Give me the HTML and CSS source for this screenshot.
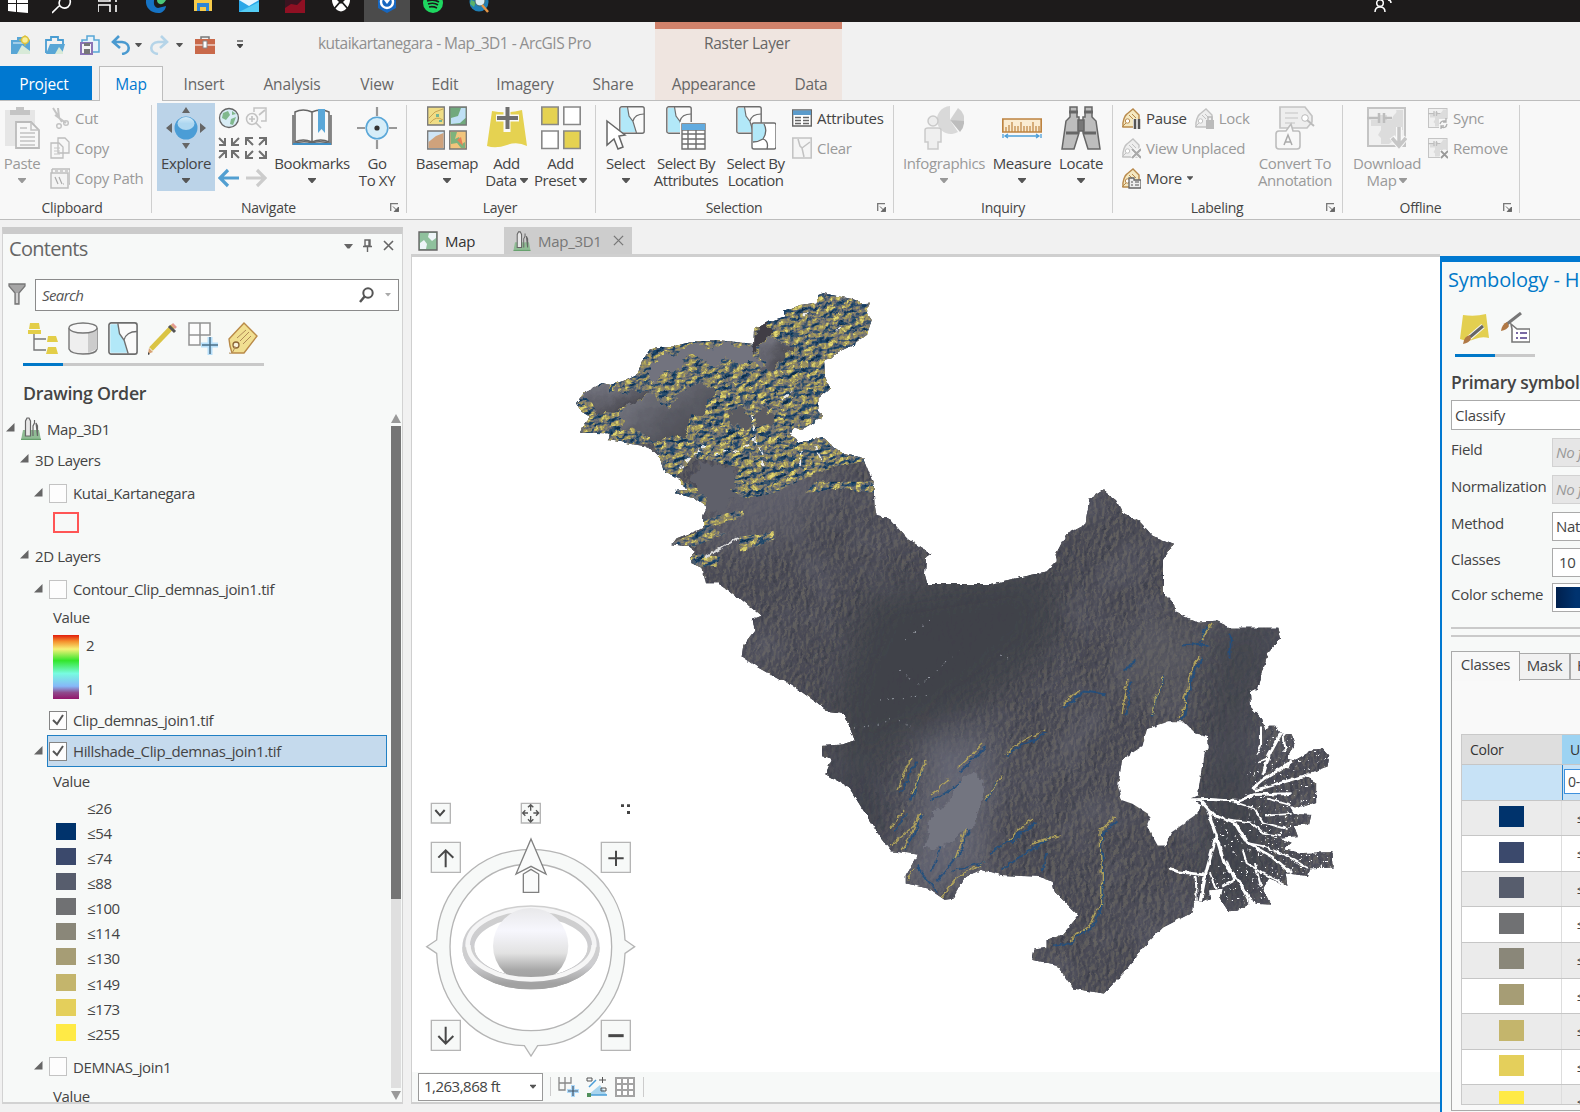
FILE: index.html
```html
<!DOCTYPE html>
<html lang="en">
<head>
<meta charset="utf-8">
<title>kutaikartanegara - Map_3D1 - ArcGIS Pro</title>
<link rel="stylesheet" href="styles.css">
</head>
<body>
<svg class="defs" aria-hidden="true">
  <defs>
    <symbol id="tri" viewBox="0 0 8 5"><path d="M0 0H8V1L4.5 5H3.5L0 1Z"/></symbol>
    <symbol id="launch" viewBox="0 0 9 9"><path d="M.7 8V.7H8" fill="none" stroke="#777" stroke-width="1.3"/><path d="M3 3.5l4 4M8.6 4v4.6H4.2z" stroke="#666" fill="#666"/></symbol>
    <symbol id="exp" viewBox="0 0 9 9"><path d="M8.5 0V8.5H0Z" fill="#666"/></symbol>
    <symbol id="poly" viewBox="0 0 26 28"><rect x=".8" y=".8" width="24.4" height="26.4" rx="2" fill="#fafafa" stroke="#6e6e6e" stroke-width="1.4"/><path d="M2 2H8.5L10 10L14 16L16.5 26H2Z" fill="#b2e8f8"/><path d="M8.5 1L10 10L14 15.5L17.500 27M14 15C15 11 19 8 25 8" fill="none" stroke="#6e6e6e" stroke-width="1.2"/></symbol>
    <symbol id="tag" viewBox="0 0 20 22"><path d="M2 20C1 15 4 8 6 7L12 2L18 8V20Z" fill="var(--f)" stroke="var(--s)" stroke-width="1.4"/><circle cx="6.500" cy="14" r="2.200" fill="#fff" stroke="var(--s)"/><path d="M1 20L5 16M8 8l4 4M11 7l4 4" stroke="var(--s)" fill="none"/></symbol>
    <symbol id="city" viewBox="0 0 20 23"><path d="M2 13H18L20 23H0Z" fill="#8fbc94"/><path d="M0 22.300H20" stroke="#5c9862"/><path d="M4.500 19V4L6 1H8L9.500 4V19ZM12 19V9L13.500 6V3M15 6L16.500 9V19Z" fill="#e8e8e8" stroke="#666" stroke-width="1.200"/></symbol>
    <symbol id="dl" viewBox="0 0 40 42"><rect x="1" y="2" width="37" height="38" fill="#f0f0f0" stroke="#c4c4c4" stroke-width="2"/><path d="M4 14H13V9H20V14H25C26 7 31 8 29 4L36 4V24H30L28 33L22 38H14V32L11 29L14 24V20H4Z" fill="#dcdcdc"/><path d="M0 12H12M12 7V17M17 7V17M17 12H25" stroke="#bdbdbd" stroke-width="2.500"/></symbol>
  </defs>
</svg>

<div class="taskbar">
  <span class="slot"><svg viewBox="0 0 26 22"><path d="M2 0h8v3H2zM11 0h11v3H11zM2 4h8v8l-8-1zM11 4h11v9l-11-1z" transform="translate(-2 0)" fill="#fff"/></svg></span>
  <span class="slot"><svg viewBox="0 0 26 22"><path d="M0 13L7 6M8 0C5 6 11 10 16 7C18 5 19 3 18 0" fill="none" stroke="#fff" stroke-width="1.600"/></svg></span>
  <span class="slot"><svg viewBox="0 0 26 22"><path d="M0 0V1H12V0M0 12V5H12V12M18 5V12M18 0V2" fill="none" stroke="#fff" stroke-width="1.600"/></svg></span>
  <span class="slot"><svg viewBox="0 0 26 22"><path d="M2 0C1 8 8 14 16 13C20 12 22 8 22 6L14 8C9 7 10 2 10 0Z" fill="#1673c4"/><path d="M13 0C13 5 19 6 22 0Z" fill="#4cc87a"/></svg></span>
  <span class="slot"><svg viewBox="0 0 26 22"><path d="M4 0H22V11H4Z" fill="#f7cb4a"/><path d="M7 11V3H19V11H16V7H10V11Z" fill="#2f86d8"/></svg></span>
  <span class="slot"><svg viewBox="0 0 26 22"><path d="M3 0H23V12H3Z" fill="#2aa7e8"/><path d="M3 0L13 6L23 0Z" fill="#e8f6ff"/><path d="M3 12L23 2V12Z" fill="#55cdf5"/></svg></span>
  <span class="slot"><svg viewBox="0 0 26 22"><path d="M3 0H23V13H3Z" fill="#8f1023"/><path d="M3 0H20L15 5L9 4L3 8Z" fill="#3a1420"/></svg></span>
  <span class="slot"><svg viewBox="0 0 26 22"><path d="M4 0C4 5 8 11 13 11.500C18 11 22 5 22 0H17L13 4L9 0Z" fill="#fff"/><path d="M6 9L13 1L20 9" stroke="#1b1b1b" stroke-width="1.800" fill="none"/></svg></span>
  <span class="slot on"><svg viewBox="0 0 26 22"><path d="M4 0V8L13 13L22 8V0Z" fill="#1767c0"/><circle cx="13" cy="2" r="6" fill="none" stroke="#fff" stroke-width="2.400"/><path d="M10 0H16L13 4Z" fill="#fff"/></svg></span>
  <span class="slot"><svg viewBox="0 0 26 22"><circle cx="13" cy="3" r="10" fill="#1ed760"/><path d="M7 1Q14 -1 19 2M8 4Q14 2 18 5M9 7Q13 6 17 8" stroke="#1b1b1b" stroke-width="1.600" fill="none"/></svg></span>
  <span class="slot"><svg viewBox="0 0 26 22"><circle cx="13" cy="2" r="9.500" fill="#1f7fb5"/><path d="M5 0L10 2L8 7L4 4Z" fill="#58b26a"/><circle cx="14" cy="1" r="5" fill="#d9ecf2" stroke="#466"/><path d="M16 5L22 12" stroke="#e59544" stroke-width="2.500"/></svg></span>
  <svg class="person" viewBox="0 0 20 22"><circle cx="6" cy="3" r="3.300" fill="none" stroke="#fff" stroke-width="1.500"/><path d="M1 12Q1 7 6 7Q11 7 11 12M14 0Q17 0 17 3" fill="none" stroke="#fff" stroke-width="1.500"/></svg>
</div>

<header class="head">
  <div class="head-main">
    <div class="title">
      <svg class="q q1" viewBox="0 0 20 20"><path d="M1 5H7V2H13V5H20V19H1Z" fill="#58a6d6"/><path d="M3 8H17" stroke="#eaf5fb"/><path d="M7 19L12 10L20 16V19Z" fill="#d8ead8"/><circle cx="15" cy="5" r="3.500" fill="#f8ef9a" stroke="#dcc13b" stroke-width="1.500"/><path d="M15 -1V1M15 9v2M9 5h2M19 5h2" stroke="#dcc13b"/></svg>
      <svg class="q q2" viewBox="0 0 20 20"><path d="M1 18V5H6V2H13V5H18V9" fill="none" stroke="#4a9dd2" stroke-width="1.800"/><path d="M1 19L5 9H20L17 19Z" fill="#58a6d6"/><path d="M10 19L14 12L18 17V19Z" fill="#d8ead8"/></svg>
      <svg class="q q3" viewBox="0 0 20 20"><path d="M2 5H7V1H14V5H19V17H2Z" fill="#e7f3fa" stroke="#58a6d6" stroke-width="1.500"/><path d="M1 8H12V19H1Z" fill="#f5f5f5" stroke="#8b74b5" stroke-width="2"/><path d="M4 8H10V11H4ZM4 14H10V19H4Z" fill="#777"/></svg>
      <svg class="q q4" viewBox="0 0 20 20"><path d="M8 1L2 7L9 13M3 7H11C20 8 20 18 11 19" fill="none" stroke="#4a9ad0" stroke-width="2.600"/></svg>
      <svg class="t t1"><use href="#tri"/></svg>
      <svg class="q q5" viewBox="0 0 20 20"><path d="M12 1L18 7L11 13M17 7H9C0 8 0 18 9 19" fill="none" stroke="#b5d4e8" stroke-width="2.600"/></svg>
      <svg class="t t2"><use href="#tri"/></svg>
      <svg class="q q6" viewBox="0 0 20 20"><path d="M6 5V2H14V5" fill="none" stroke="#777" stroke-width="1.500"/><path d="M0 4H20V19H0Z" fill="#c9694a"/><path d="M0 10H20" stroke="#eed2c8" stroke-width="1.500"/><path d="M8 6H12V13H8Z" fill="#fff" stroke="#888"/></svg>
      <svg class="q q7" viewBox="0 0 8 9"><path d="M1 1H7" stroke="#444" stroke-width="1.300"/><path d="M1 4H7V5L4.500 8H3.500L1 5Z" fill="#444"/></svg>
      <span class="app">kutaikartanegara - Map_3D1 - ArcGIS Pro</span>
    </div>
    <nav class="tabs">
      <b class="project">Project</b><b class="active">Map</b><span class="w82">Insert</span><span class="w94">Analysis</span><span class="w76">View</span><span class="w60">Edit</span><span class="w100">Imagery</span><span class="w76">Share</span>
    </nav>
  </div>
  <div class="context"><div class="ctitle">Raster Layer</div><div class="ctabs"><span class="cap">Appearance</span><span class="cda">Data</span></div></div>
</header>

<div class="ribbon">
  <section class="group g1">
    <div class="body">
      <div class="btn off w45"><svg viewBox="0 0 40 44"><path d="M3 4H33V40H3Z" fill="#e6e6e6"/><path d="M8 9V4H14V1H22V4H28V9Z" fill="#c4c4c4"/><path d="M14 16H29L37 24V42H14Z" fill="#f7f7f7" stroke="#bbb" stroke-width="1.800"/><path d="M29 16V24H37M18 22H25M18 27H33M18 31H33M18 35H33M18 39H33" stroke="#c2c2c2" fill="none" stroke-width="1.500"/></svg><span>Paste</span><svg class="tri"><use href="#tri"/></svg></div>
      <div class="small off pl5">
        <p><svg viewBox="0 0 20 22"><path d="M3 1L12 15M8 1L9 10M5 8L16 16" stroke="#c4c4c4" stroke-width="2" fill="none"/><circle cx="9" cy="19" r="2.300" fill="none" stroke="#c4c4c4" stroke-width="1.500"/><circle cx="16" cy="16" r="2.300" fill="none" stroke="#c4c4c4" stroke-width="1.500"/></svg>Cut</p>
        <p><svg viewBox="0 0 20 22"><path d="M8 1H15L19 5V16H8ZM1 6H9L13 10V21H1Z" fill="#f7f7f7" stroke="#bdbdbd" stroke-width="1.300"/><path d="M4 11H10M4 14H10M4 17H10" stroke="#c6c6c6"/></svg>Copy</p>
        <p><svg viewBox="0 0 20 22"><path d="M2 2H20V17H19M2 2V6M1 6H18V21H1Z" fill="#f4f4f4" stroke="#bdbdbd" stroke-width="1.500"/><path d="M5 10L8 17M9 10L12 17M5 4H8M10 4H13M15 4H18M13 17H14" stroke="#aaa" stroke-width="1.200"/></svg>Copy Path</p>
      </div>
    </div><div class="glabel">Clipboard</div>
  </section>
  <section class="group g2">
    <div class="body">
      <div class="btn sel w58"><svg viewBox="0 0 40 44"><defs><linearGradient id="ball" x2="0" y2="1"><stop stop-color="#d5ebf8"/><stop offset=".5" stop-color="#aed7f0"/></linearGradient></defs><path d="M16 7L20 1L24 7ZM16 37L20 43L24 37ZM6 17L0 22L6 27ZM34 17L40 22L34 27Z" fill="#666"/><circle cx="20" cy="22" r="11.500" fill="#4b9dd6"/><ellipse cx="20" cy="17.500" rx="8.500" ry="6.500" fill="url(#ball)"/></svg><span>Explore</span><svg class="tri"><use href="#tri"/></svg></div>
      <div class="nav-grid">
        <svg viewBox="0 0 22 22"><circle cx="11" cy="11" r="9.500" fill="#d8ecf5" stroke="#666" stroke-width="1.300"/><path d="M5 6L10 4L12 8L8 13L4 11ZM13 12L18 10L15 18L12 17ZM14 4L18 7L14 8Z" fill="#80b88d"/></svg>
        <svg viewBox="0 0 22 22"><path d="M9 5V1H21V14H16" fill="none" stroke="#c3c3c3" stroke-width="1.500"/><circle cx="7" cy="12" r="5.500" fill="#f8f8f8" stroke="#c3c3c3" stroke-width="1.500"/><path d="M4 12H10M7 9V15M11 16L16 21M14 8L20 3" stroke="#c3c3c3" stroke-width="1.700"/></svg>
        <svg viewBox="0 0 22 22"><path d="M1 1L7 7M7 1V8H1M21 1L14 8M14 1V8H21M1 21L7 15M1 14H8V21M21 21L14 14M21 14H14V21" fill="none" stroke="#707070" stroke-width="2"/></svg>
        <svg viewBox="0 0 22 22"><path d="M8 8L1 1M8 1H1V8M14 8L21 1M14 1H21V8M8 14L1 21M1 14V21H8M14 14L21 21M21 14V21H14" fill="none" stroke="#707070" stroke-width="2"/></svg>
        <svg viewBox="0 0 22 22"><path d="M21 11H3M10 3L2 11L10 19" fill="none" stroke="#529fd1" stroke-width="3.200"/></svg>
        <svg viewBox="0 0 22 22"><path d="M1 11H19M12 3L20 11L12 19" fill="none" stroke="#ccc" stroke-width="3.200"/></svg>
      </div>
      <div class="btn w88"><svg viewBox="0 0 40 44"><path d="M1 9V38Q11 34 20 37Q29 34 39 38V9" fill="#dcdcdc" stroke="#666" stroke-width="1.500"/><path d="M1 38H39" stroke="#3f8fc6" stroke-width="2"/><path d="M3 6Q11 2 20 6V36Q11 32 3 36ZM37 6Q29 2 20 6V36Q29 32 37 36Z" fill="#f8f8f8" stroke="#666" stroke-width="1.500"/><path d="M26 3H33V27L29.500 23L26 27Z" fill="#5aa7d8"/></svg><span>Bookmarks</span><svg class="tri"><use href="#tri"/></svg></div>
      <div class="btn w44"><svg viewBox="0 0 40 44"><path d="M20 1V10M20 34V43M0 22H8M32 22H40" stroke="#999" stroke-width="2.200"/><circle cx="20" cy="22" r="10.800" fill="#d6edf8" stroke="#5aa7d8" stroke-width="1.600"/><circle cx="20" cy="22" r="2.600" fill="#333"/></svg><span>Go<br>To XY</span></div>
    </div><div class="glabel">Navigate</div><svg class="launch"><use href="#launch"/></svg>
  </section>
  <section class="group g3">
    <div class="body">
      <div class="btn w66"><svg viewBox="0 0 40 44"><g stroke="#777" stroke-width="1.300"><path d="M.7 1H17.300V19H.7Z" fill="#f0dd86"/><path d="M22.700 1H39.300V19H22.700Z" fill="#71a97d"/><path d="M.7 25H17.300V43H.7Z" fill="#cfe5f5"/><path d="M22.700 25H39.300V43H22.700Z" fill="#f2c57c"/></g><path d="M1.500 42V36L9 30L16.500 27V42Z" fill="#cfa27c"/><path d="M34 2H38.500V12L33 17L24 18V12L31 10Z" fill="#bfe0f5"/><path d="M2 12L8 6L16 3M3 17Q9 9 16 14" stroke="#c9a553" fill="none"/><path d="M9 8h3v3h-3zM12 14h3v2h-3z" fill="#75b594"/><path d="M23.500 26H30L28 33L32 31L35 38L38 36V42H34L30 37L24 38Z" fill="#7eb37c"/><path d="M30 34L34 31L36 40Z" fill="#e87f57"/></svg><span>Basemap</span><svg class="tri"><use href="#tri"/></svg></div>
      <div class="btn w53"><svg viewBox="0 0 40 44"><path d="M5 5Q20 8 35 4L40 40Q30 35 20 39Q9 43 0 40Z" fill="#e5d251"/><path d="M20 0V26M9 12H32" stroke="#f9f9f9" stroke-width="7"/><path d="M20.500 1V23M10 12H31" stroke="#707070" stroke-width="4"/></svg><span>Add</span><span class="dd">Data<svg class="itri"><use href="#tri"/></svg></span></div>
      <div class="btn w56"><svg viewBox="0 0 40 44"><g stroke="#888" stroke-width="1.600" fill="#fff"><path d="M.8 1H17.200V18.500H.8Z" fill="#e5d251"/><path d="M22.800 1H39.200V18.500H22.800ZM.8 25H17.200V42.500H.8Z"/><path d="M22.800 25H39.200V42.500H22.800Z" fill="#e5d251"/></g></svg><span>Add</span><span class="dd">Preset<svg class="itri"><use href="#tri"/></svg></span></div>
    </div><div class="glabel">Layer</div>
  </section>
  <section class="group g4">
    <div class="body">
      <div class="btn w53"><svg viewBox="0 0 40 44"><svg x="13" y="0" width="26" height="28"><use href="#poly"/></svg><path d="M1 15L19 29L13 30L17 41L12 43L8 33L1 39Z" fill="#fff" stroke="#666" stroke-width="1.500"/></svg><span>Select</span><svg class="tri"><use href="#tri"/></svg></div>
      <div class="btn w68"><svg viewBox="0 0 40 44"><svg x="0" y="0" width="26" height="28"><use href="#poly"/></svg><path d="M16 18H39V43H16Z" fill="#fff" stroke="#f8f8f8" stroke-width="4"/><path d="M16 18H39V43H16ZM16 24H39M16 28H39M16 33H39M16 38H39M22 24V43M30 24V43" fill="none" stroke="#6e6e6e" stroke-width="1.400"/><path d="M16 18H39V24H16Z" fill="#62abdf"/></svg><span>Select By<br>Attributes</span></div>
      <div class="btn w72"><svg viewBox="0 0 40 44"><svg x="0" y="0" width="26" height="28"><use href="#poly"/></svg><rect x="16" y="17" width="24" height="26" rx="2" fill="#fff" stroke="#6e6e6e" stroke-width="1.400"/><path d="M17 18H28Q32 25 27 33L17 36Z" fill="#b2e8f8"/><path d="M28 18Q32 25 27 33Q22 36 17 36M27 33Q33 35 31 43" fill="none" stroke="#666" stroke-width="1.300"/></svg><span>Select By<br>Location</span></div>
      <div class="small">
        <p><svg viewBox="0 0 20 22"><path d="M.7 3H19.300V19H.7Z" fill="#fff" stroke="#666" stroke-width="1.400"/><path d="M1 3.500H19V8H1Z" fill="#5b9bcb"/><path d="M3 10.500H9M3 13.500H9M3 16.500H9M11 10.500H17M11 13.500H17M11 16.500H17" stroke="#666" stroke-width="1.400"/></svg>Attributes</p>
        <p class="off"><svg viewBox="0 0 20 22"><rect x=".8" y="1" width="18.400" height="20" fill="#f5f5f5" stroke="#c2c2c2" stroke-width="1.500"/><path d="M6 2L8 9L10 11L12 20M10 11L18 5" stroke="#c2c2c2" stroke-width="1.500" fill="none"/></svg>Clear</p>
      </div>
    </div><div class="glabel">Selection</div><svg class="launch"><use href="#launch"/></svg>
  </section>
  <section class="group g5">
    <div class="body">
      <div class="btn off w92"><svg viewBox="0 0 40 44"><path d="M26 14V0A14 14 0 1 0 34 26Z" fill="#d9d9d9"/><path d="M26 14L34 2A14 14 0 0 1 40 17Z" fill="#d2d2d2"/><path d="M26 14L40 15A14 14 0 0 1 36 26Z" fill="#bdbdbd"/><circle cx="9" cy="15" r="5" fill="#ededed" stroke="#cacaca" stroke-width="1.500"/><path d="M1 24Q1 22 4 22H14Q17 22 17 24V36H14V43H4V36H1Z" fill="#efefef" stroke="#cacaca" stroke-width="1.500"/></svg><span>Infographics</span><svg class="tri"><use href="#tri"/></svg></div>
      <div class="btn w64"><svg viewBox="0 0 40 44"><path d="M.8 13H39.200V26H.8Z" fill="#faecd2" stroke="#bd8340" stroke-width="1.700"/><path d="M4 26V21M7 26V19M10 26V16M13 26V20M16 26V20M19 26V16M22 26V20M25 26V20M28 26V20M31 26V16M34 26V20M37 26V20" stroke="#bd8340" stroke-width="1.200"/><path d="M1 28V32M39 28V32M3 30H37M6 28L3 30L6 32M34 28L37 30L34 32" fill="none" stroke="#4b9ed8" stroke-width="1.300"/></svg><span>Measure</span><svg class="tri"><use href="#tri"/></svg></div>
      <div class="btn w54"><svg viewBox="0 0 40 44"><g fill="#bdbdbd" stroke="#666" stroke-width="1.500"><path d="M9 1H16V11H18V27L13 43H1L5 15L9 11ZM31 1H24V11H22V27L27 43H39L35 15L31 11Z"/><path d="M17 14H23V25H17Z" fill="#777"/><path d="M8 6H17M23 6H32M5 27H18M22 27H35" fill="none" stroke-width="3"/></g></svg><span>Locate</span><svg class="tri"><use href="#tri"/></svg></div>
    </div><div class="glabel">Inquiry</div>
  </section>
  <section class="group g6">
    <div class="body">
      <div class="small lab">
        <p><svg class="gold" viewBox="0 0 20 22"><use href="#tag"/><path d="M12 12H20V22H12Z" fill="#f8f8f8"/><path d="M14 12V22M18 12V22" stroke="#555" stroke-width="2.500"/></svg>Pause <svg class="grey in" viewBox="0 0 20 22"><use href="#tag"/><path d="M12 13H20V22H12Z" fill="#bbb"/><path d="M14 13V10H18V13" stroke="#bbb" fill="none" stroke-width="1.500"/></svg><i>Lock</i></p>
        <p class="off"><svg class="grey" viewBox="0 0 20 22"><use href="#tag"/><path d="M11 12L20 21M20 12L11 21" stroke="#fff" stroke-width="4"/><path d="M11 12L20 21M20 12L11 21" stroke="#aaa" stroke-width="2.300"/></svg>View Unplaced</p>
        <p><svg class="gold" viewBox="0 0 20 22"><use href="#tag"/><path d="M8 11H13V13H20V21H8Z" fill="#eee" stroke="#666" stroke-width="1.300"/><path d="M10 15H12M14 15H18M10 18H12M14 18H18" stroke="#555"/></svg>More <svg class="mtri"><use href="#tri"/></svg></p>
      </div>
      <div class="btn off w80"><svg viewBox="0 0 40 44"><path d="M5 1H30L37 10V16L32 22H5Z" fill="#eee" stroke="#c4c4c4" stroke-width="1.700"/><path d="M10 7H23M10 12H23M10 17H20" stroke="#d2d2d2" stroke-width="1.500"/><circle cx="30" cy="12" r="3.300" fill="#fff" stroke="#bbb"/><path d="M32 14L39 20" stroke="#bbb" stroke-width="2"/><path d="M4 25H11L16 18L18 25H23Q25 25 25 28V40Q25 43 22 43H4Q1 43 1 40V28Q1 25 4 25Z" fill="#f8f8f8" stroke="#bdbdbd" stroke-width="1.600"/><path d="M9 39L13 29L17 39M10 36H16" fill="none" stroke="#aaa" stroke-width="1.500"/></svg><span>Convert To<br>Annotation</span></div>
    </div><div class="glabel">Labeling</div><svg class="launch"><use href="#launch"/></svg>
  </section>
  <section class="group g7">
    <div class="body">
      <div class="btn off w77"><svg viewBox="0 0 40 44"><svg width="40" height="42"><use href="#dl"/></svg><path d="M32 21V40M25 31L32 40L39 31" fill="none" stroke="#f8f8f8" stroke-width="6"/><path d="M32 21V40M25 32L32 40L39 32" fill="none" stroke="#c6c6c6" stroke-width="3.500"/></svg><span>Download</span><span class="dd">Map<svg class="itri"><use href="#tri"/></svg></span></div>
      <div class="small off">
        <p><svg viewBox="0 0 20 22"><use href="#dl"/><path d="M11 12H20V22H11Z" fill="#f7f7f7"/><path d="M12 17Q13 13 18 14M19 17Q18 22 13 20M18 11V15H15M13 22V19H16" fill="none" stroke="#b0b0b0" stroke-width="1.300"/></svg>Sync</p>
        <p><svg viewBox="0 0 20 22"><use href="#dl"/><path d="M12 13H20V22H12Z" fill="#f7f7f7"/><path d="M13 14L20 21M20 14L13 21" stroke="#999" stroke-width="1.800"/></svg>Remove</p>
      </div>
    </div><div class="glabel">Offline</div><svg class="launch"><use href="#launch"/></svg>
  </section>
</div>

<main class="work">
  <aside class="contents">
    <div class="phead"><h2>Contents</h2>
      <svg viewBox="0 0 52 14"><path d="M1 5H10L6.500 9.500H4.500Z" fill="#666"/><path d="M22 1H27V7H22ZM20 7.500H29M24.500 8V13M26 1V7" fill="none" stroke="#666" stroke-width="1.400"/><path d="M41 2L50 11M50 2L41 11" stroke="#666" stroke-width="1.600"/></svg>
    </div>
    <div class="search"><svg class="funnel" viewBox="0 0 18 22"><path d="M1 1H17V3L11 10V21H7V10L1 3Z" fill="#a6a6a6" stroke="#777" stroke-width="1.300"/><path d="M9 10V20" stroke="#fff"/></svg>
      <div class="box"><em>Search</em><svg viewBox="0 0 32 16"><circle cx="9" cy="6" r="4.700" fill="none" stroke="#555" stroke-width="2"/><path d="M6 9L1 15" stroke="#555" stroke-width="2.500"/><path d="M26 6H32L29 9.500Z" fill="#aaa"/></svg></div></div>
    <div class="views">
      <svg viewBox="0 0 30 33"><path d="M6 12V28H18M6 17H18" fill="none" stroke="#777" stroke-width="1.400"/><path d="M1 7L2 1H11L12 7ZM0 8H13V12H0ZM19 20L20 14H28L30 20ZM18 32L20 25H28L30 32Z" fill="#e3ce48"/></svg>
      <svg viewBox="0 0 30 33"><path d="M1 6V27Q3 32 15 32Q28 32 29 27V6" fill="#efefef" stroke="#777" stroke-width="1.400"/><path d="M20 11V31L29 27V7Z" fill="#ccc"/><ellipse cx="15" cy="6" rx="14" ry="5" fill="#f8f8f8" stroke="#777" stroke-width="1.400"/></svg>
      <svg viewBox="0 0 26 28" preserveAspectRatio="none"><use href="#poly"/></svg>
      <svg viewBox="0 0 30 33"><path d="M3 27L25 4" stroke="#dac444" stroke-width="5"/><path d="M21 4L27 10" stroke="#555" stroke-width="3"/><path d="M25 5L27 3" stroke="#e39a91" stroke-width="5.500"/><path d="M0 32L1 26L5 30Z" fill="#d9a375"/><path d="M0 33V30L2 32Z" fill="#444"/></svg>
      <svg viewBox="0 0 30 33"><path d="M1 1H22V13H1ZM12 1V23H1V1" fill="#fcfcfc" stroke="#929292" stroke-width="1.500"/><path d="M22 15V33M13 23H30" stroke="#b7dffa" stroke-width="5"/><path d="M22 15V32M14 23H30" stroke="#4b6f87" stroke-width="1.500"/></svg>
      <svg viewBox="0 0 30 33"><path d="M1 17L16 1L29 14L16 31H4L2 24Z" fill="#f1df91" stroke="#b98a48" stroke-width="1.400"/><circle cx="8" cy="23" r="3" fill="#f9f2da" stroke="#8b6535" stroke-width="1.300"/><path d="M1 31Q5 33 7 24M9 16L18 8M12 19L21 10M15 22L23 14" fill="none" stroke="#b08a58"/></svg>
    </div>
    <div class="bar"></div>
    <h3>Drawing Order</h3>
    <div class="tree-wrap">
      <div class="tree">
        <div class="row h29"><svg class="ex"><use href="#exp"/></svg><svg class="cityi"><use href="#city"/></svg>Map_3D1</div>
        <div class="row h33 l1 med"><svg class="ex"><use href="#exp"/></svg>3D Layers</div>
        <div class="row h34 l2"><svg class="ex"><use href="#exp"/></svg><span class="cb"></span>Kutai_Kartanegara</div>
        <div class="row h29 sy"><span class="redbox"></span></div>
        <div class="row h33 l1 med"><svg class="ex"><use href="#exp"/></svg>2D Layers</div>
        <div class="row h34 l2"><svg class="ex"><use href="#exp"/></svg><span class="cb"></span>Contour_Clip_demnas_join1.tif</div>
        <div class="row h22 sy med">Value</div>
        <div class="row h77 sy"><span class="ramp"></span><span class="rl"><span>2</span><span>1</span></span></div>
        <div class="row h30 nox"><span class="cb on"><svg viewBox="0 0 12 12"><path d="M1 6L5 10L11 1" fill="none" stroke="#555" stroke-width="2"/></svg></span>Clip_demnas_join1.tif</div>
        <div class="row h32 l2 hill"><svg class="ex"><use href="#exp"/></svg><div class="hl"><span class="cb on"><svg viewBox="0 0 12 12"><path d="M1 6L5 10L11 1" fill="none" stroke="#555" stroke-width="2"/></svg></span>Hillshade_Clip_demnas_join1.tif</div></div>
        <div class="row h28 sy med">Value</div>
        <div class="cls"><i></i>≤26</div>
        <div class="cls"><i class="c1"></i>≤54</div>
        <div class="cls"><i class="c2"></i>≤74</div>
        <div class="cls"><i class="c3"></i>≤88</div>
        <div class="cls"><i class="c4"></i>≤100</div>
        <div class="cls"><i class="c5"></i>≤114</div>
        <div class="cls"><i class="c6"></i>≤130</div>
        <div class="cls"><i class="c7"></i>≤149</div>
        <div class="cls"><i class="c8"></i>≤173</div>
        <div class="cls"><i class="c9"></i>≤255</div>
        <div class="row h41 l2"><svg class="ex"><use href="#exp"/></svg><span class="cb"></span>DEMNAS_join1</div>
        <div class="row h18 sy med">Value</div>
      </div>
      <div class="scroll"><svg viewBox="0 0 10 9"><path d="M5 0L10 9H0Z" fill="#999"/></svg><div class="track"><div class="thumb"></div></div><svg viewBox="0 0 10 9"><path d="M5 9L10 0H0Z" fill="#999"/></svg></div>
    </div>
  </aside>

  <section class="view">
    <div class="vtabs"><span class="vt1"><svg viewBox="0 0 20 20"><path d="M1 1H19V19H1Z" fill="#8fc19d" stroke="#666" stroke-width="1.400"/><path d="M2 12L6 9L9 13L8 18H2ZM11 2H18V7L14 10L10 6Z" fill="#eef5f8"/></svg>Map</span><span class="vt2"><svg viewBox="0 0 20 23"><use href="#city"/></svg>Map_3D1<svg class="x" viewBox="0 0 12 12"><path d="M1 1L11 11M11 1L1 11" stroke="#777" stroke-width="1.400"/></svg></span></div>
    <div class="canvas">
      <svg class="map" viewBox="412 257 1028 815" width="1028" height="815">
        <defs>
          <path id="pa" transform="translate(560 280) scale(.33333)" d="M48 370L75 335 125 310 150 315 190 303 235 280 245 245 270 208 330 200 400 185 470 180 580 192 582 150 625 125 672 110 672 95 720 75 770 68 775 45 790 40 830 48 880 58 905 70 930 68 918 95 935 120 920 165 880 195 835 215 815 235 792 240 795 290 810 325 775 355 775 395 790 408 745 440 720 450 700 445 692 458 712 490 785 472 840 515 910 535 930 585 942 620 932 655 945 680 950 710 985 712 1045 780 1113 820 1097 832 1094 880 1100 912 1300 912 1300 1200 660 1200 590 1160 545 1130 550 1095 585 1050 580 1015 600 1015 600 1000 555 960 520 945 480 910 438 910 428 865 395 850 390 830 405 815 385 800 337 793 350 775 430 745 430 710 440 680 405 655 345 640 350 632 380 630 360 600 310 570 300 535 265 500 145 480 150 460 60 458 70 435 90 410 65 395Z"/>
          <path id="pb" transform="translate(720 480) scale(.4083 .339)" d="M0 0L375 0 380 105 415 115 460 175 518 218 505 222 502 280 508 308 658 308 760 280 800 270 825 240 822 220 848 160 895 130 905 55 938 30 970 60 985 95 1030 125 1060 165 1112 188 1085 235 1085 330 1112 365 1115 390 1165 418 1215 415 1250 436 1365 436 1372 470 1342 510 1315 615 1298 625 1300 670 1328 705 1335 740 1345 725 1362 725 1372 745 1400 750 1408 775 1390 820 1410 825 1455 795 1475 793 1492 815 1488 845 1465 855 1430 872 1460 892 1460 950 1425 965 1395 965 1405 985 1448 988 1443 1015 1405 1018 1415 1050 1370 1055 1400 1070 1380 1090 1425 1100 1500 1098 1503 1143 1445 1145 1440 1168 1385 1160 1390 1197 1345 1175 1330 1205 1348 1252 1310 1250 1290 1210 1298 1250 1268 1270 1245 1272 1225 1235 1232 1205 1200 1210 1202 1235 1185 1245 1162 1240 1158 1275 1085 1320 1035 1380 1000 1440 940 1515 865 1500 825 1430 765 1415 770 1385 800 1380 800 1360 840 1340 878 1285 820 1215 815 1185 780 1170 690 1165 640 1150 600 1170 570 1235 550 1238 510 1205 455 1190 455 1165 485 1105 420 1095 385 1040 315 905 258 868 275 822 250 815 250 785 300 780 330 768 305 690 270 685 200 625 120 560 55 522 60 490 85 450 80 410 100 400 50 350 0 310Z"/>
          <clipPath id="land"><use href="#pa"/><use href="#pb"/></clipPath>
          <clipPath id="rough"><path transform="translate(560 280) scale(.33333)" d="M0 0H1000V530L910 545 820 560 740 590 640 640 570 655 510 640 540 560 400 530 350 590 450 650 440 690 340 650 280 490 100 500 0 480Z M735 640L770 605 940 605 945 640 840 625Z M430 720L550 690 545 710 430 750Z M330 790L440 745 500 760 400 800Z M535 770L640 755 645 780 540 815Z M380 820L480 830 470 860 390 860Z"/></clipPath>
          <filter id="jag" x="-5%" y="-5%" width="110%" height="110%"><feTurbulence type="fractalNoise" baseFrequency=".16" numOctaves="2" seed="3"/><feDisplacementMap in="SourceGraphic" scale="4" xChannelSelector="R" yChannelSelector="G"/></filter>
          <filter id="wig" x="-20%" y="-20%" width="140%" height="140%"><feTurbulence type="fractalNoise" baseFrequency=".06" numOctaves="2" seed="8"/><feDisplacementMap in="SourceGraphic" scale="8" xChannelSelector="R" yChannelSelector="G"/></filter>
          <filter id="wig2" x="-20%" y="-20%" width="140%" height="140%"><feTurbulence type="fractalNoise" baseFrequency=".05" numOctaves="4" seed="18"/><feDisplacementMap in="SourceGraphic" scale="26" xChannelSelector="R" yChannelSelector="G"/></filter>
          <filter id="relief" x="0" y="0" width="100%" height="100%" color-interpolation-filters="sRGB"><feTurbulence type="fractalNoise" baseFrequency=".24 .14" numOctaves="3" seed="5"/><feColorMatrix values="0 0 0 0 0 0 0 0 0 0 0 0 0 0 0 1 0 0 0 0"/><feDiffuseLighting surfaceScale="1.100" lighting-color="#fff"><feDistantLight azimuth="205" elevation="45"/></feDiffuseLighting><feComponentTransfer><feFuncR type="table" tableValues=".15 .17 .2 .22 .24 .26 .285 .305 .36 .39 .40"/><feFuncG type="table" tableValues=".17 .19 .21 .23 .25 .265 .288 .305 .355 .38 .39"/><feFuncB type="table" tableValues=".23 .25 .27 .28 .29 .31 .33 .345 .36 .37 .37"/></feComponentTransfer></filter>
          <filter id="tone" x="0" y="0" width="100%" height="100%" color-interpolation-filters="sRGB"><feTurbulence type="fractalNoise" baseFrequency=".018" numOctaves="3" seed="21"/><feColorMatrix values="0 0 0 0 .46 0 0 0 0 .46 0 0 0 0 .51 2.600 0 0 0 -1.100"/></filter>
          <filter id="mount" x="0" y="0" width="100%" height="100%" color-interpolation-filters="sRGB"><feTurbulence type="fractalNoise" baseFrequency=".11 .17" numOctaves="5" seed="11"/><feColorMatrix values="0 0 0 0 0 0 0 0 0 0 0 0 0 0 0 1 0 0 0 0"/><feDiffuseLighting surfaceScale="4.500" lighting-color="#fff"><feDistantLight azimuth="220" elevation="45"/></feDiffuseLighting><feComponentTransfer><feFuncR type="table" tableValues=".06 .09 .12 .17 .25 .35 .43 .49 .57 .66 .9"/><feFuncG type="table" tableValues=".18 .24 .28 .31 .34 .38 .44 .48 .54 .62 .86"/><feFuncB type="table" tableValues=".3 .38 .42 .43 .42 .43 .46 .44 .38 .35 .45"/></feComponentTransfer></filter>
          <filter id="specks" x="0" y="0" width="100%" height="100%" color-interpolation-filters="sRGB"><feTurbulence type="fractalNoise" baseFrequency=".35" numOctaves="2" seed="2"/><feColorMatrix values="0 0 0 0 1 0 0 0 0 1 0 0 0 0 1 14 0 0 0 -9.700"/></filter>
          <filter id="b20"><feGaussianBlur stdDeviation="18"/></filter>
          <linearGradient id="s1" x1="0" y1="0" x2="1" y2="1"><stop stop-color="#7d7e89"/><stop offset="1" stop-color="#3d3c43"/></linearGradient>
          <linearGradient id="s2" x1="0" y1="0" x2="1" y2="1"><stop stop-color="#84858f"/><stop offset=".5" stop-color="#5c5d66"/><stop offset="1" stop-color="#46464d"/></linearGradient>
          <clipPath id="delta"><path d="M1250 850L1245 780 1275 725 1335 760 1335 900 1195 905 1225 850 1210 800Z"/></clipPath>
        </defs>
        <g filter="url(#jag)"><g clip-path="url(#land)">
          <path d="M560 280H1350V1010H560Z" fill="#464851"/>
          <rect x="560" y="280" width="790" height="730" filter="url(#relief)"/>
          <rect x="560" y="280" width="790" height="730" filter="url(#tone)" opacity=".28"/>
          <g filter="url(#b20)"><path d="M870 590L1050 560 1060 640 990 700 850 780 830 700Z" fill="#3f414a" opacity=".95"/><path d="M1215 620H1290L1250 720 1270 900 1200 900Z" fill="#3f414a" opacity=".8"/><path d="M820 760L880 760 890 850 850 850Z" fill="#3f414a" opacity=".9"/><path d="M700 460L860 470 800 520 720 560Z" fill="#686974" opacity=".65"/><path d="M930 740L1000 730 970 880 900 900Z" fill="#6c6d7a" opacity=".8"/><path d="M1140 620L1210 620 1180 700 1120 690Z" fill="#65656b" opacity=".5"/></g>
          <g clip-path="url(#rough)"><rect x="560" y="280" width="330" height="300" filter="url(#mount)"/></g>
          <g filter="url(#wig2)"><g transform="translate(560 280) scale(.33333)">
            <path d="M300 225L440 195 590 205 595 255 500 250 420 235 340 270 280 300 265 280Z" fill="#72737e"/>
            <path d="M620 165L690 205 640 270 595 260Z" fill="url(#s1)"/>
            <path d="M60 355L130 310 190 320 265 340 210 390 110 400Z" fill="url(#s1)"/>
            <path d="M580 145L625 130 620 165 590 230 575 190Z" fill="#3f3e45"/>
            <path d="M175 400L265 350 290 370 330 380 380 320 470 310 450 380 400 400 370 470 300 485 240 470 190 430Z" fill="url(#s2)"/>
            <path d="M400 540L520 560 510 640 560 670 440 690 410 620Z" fill="#5f606b"/>
            <path d="M590 390L635 400 620 440 590 450ZM520 395L570 390 570 430 530 440Z" fill="#5c5c62"/>
          </g></g>
          <g fill="none" stroke="#f2f3f6" stroke-width="1.500" stroke-dasharray="6 5" filter="url(#wig)"><path d="M752 415L756 440 738 450 715 455M680 470L692 455 706 445M782 400L792 392M765 465L755 440M800 465L802 450M822 460L815 445M805 315L810 308M835 330L842 322"/></g>
          <path d="M705 557L720 549 738 538" stroke="#ddd" stroke-width="2" fill="none"/>
          <g fill="none" filter="url(#wig)" opacity=".9"><g stroke="#24507e" stroke-width="1.800" transform="translate(1.500 1.500)"><path d="M1150 715L1162 672M1180 720L1190 680 1202 655M1063 704L1082 690 1105 693M1005 752L1030 740 1046 730M1180 645L1205 643M1100 830L1102 900 1095 920 1070 940 1050 945M1115 820L1100 832M985 800L995 780M975 805L960 850 935 880M905 850L920 815M928 800L960 780M950 870L985 860M1020 855L1050 835M1195 645L1205 625M1228 655V632M915 865L935 890M940 845L930 870M990 850L1020 830M1125 715L1130 680M1120 670L1135 660M910 800L920 770M1000 870L1020 855M1040 870L1045 850M893 830L905 812M900 790L915 760M960 770L985 745M1010 840L1035 820"/></g><g stroke="#b9aa5c" stroke-width="1.400"><path d="M1152 715L1162 675M1180 718L1190 680 1200 655M1063 704L1080 690M1005 752L1046 728M1100 830L1102 900 1092 922 1070 940M1115 818L1100 830M985 800L1002 775M975 805L955 860M903 852L920 815M930 795L950 780M1200 640L1212 622M890 845L915 825M940 900L955 880 985 862M915 870L908 880M1122 715L1128 680M1060 835L1030 845M912 795L925 760M890 828L902 812M898 788L912 760M958 768L983 745M1008 838L1033 820"/></g></g>
          <g filter="url(#wig2)"><path d="M935 820L950 790 980 770 985 800 970 825 945 845 925 848Z" fill="#737480"/></g>
          <g stroke="#fff" fill="none" stroke-linejoin="round" transform="translate(720 480) scale(.4083 .339)">
            <path stroke-width="8" d="M1148 943L1200 942 1270 948 1310 928 1400 925M1180 950L1210 990 1260 1010 1290 1070 1350 1110 1400 1160M1195 975L1215 1050 1190 1160 1175 1250M1215 1050L1235 1130 1270 1180 1300 1250M1100 1145L1120 1155 1185 1165M1305 910L1335 880 1400 830M1330 870L1345 810 1375 745M1310 915L1370 895 1450 865"/>
            <path stroke-width="5" d="M1260 950L1310 970 1330 1010 1390 1030M1290 1070L1330 1080 1390 1110 1440 1145M1280 1090L1290 1130 1330 1160 1380 1190M1325 730V780L1315 810M1240 1000L1300 1010 1330 1040 1370 1050M1335 990L1400 985M1200 1160L1215 1210M1240 1120L1260 1180 1230 1200M1345 820L1320 830M1380 745L1385 800M1405 800L1390 850M1310 1130L1325 1200M1165 1170L1168 1250M1340 940L1400 960"/>
          </g>
          <g clip-path="url(#delta)"><rect x="1185" y="720" width="150" height="190" filter="url(#specks)"/></g>
          <g stroke="#9ca1aa" stroke-width="1" stroke-dasharray="1 7 1 3 2 9" fill="none"><path d="M855 728L880 724 895 718 915 730M900 670L920 685 960 650M905 640L930 620M1000 655L1010 660M880 700L930 695"/></g>
          <path fill="#fff" transform="translate(720 480) scale(.4083 .339)" d="M1045 735L1100 712 1135 712 1165 748 1195 755 1197 795 1185 800 1180 850 1170 930 1150 940 1180 960 1165 990 1140 1010 1105 1040 1090 1078 1072 1078 1045 1020 1055 990 1010 955 985 945 975 905 985 825 1035 785Z"/>
        </g></g>
      </svg>
      <svg class="navigator" viewBox="0 0 780 840" width="260" height="280">
        <defs><linearGradient id="sph" x2="0" y2="1"><stop stop-color="#e8e8ea"/><stop offset=".3" stop-color="#f7f7fd"/><stop offset=".6" stop-color="#e2e2e2"/><stop offset=".82" stop-color="#a8a8a8"/><stop offset="1" stop-color="#9c9c9c"/></linearGradient>
        <linearGradient id="tor" x2="0" y2="1"><stop stop-color="#cfcfcf"/><stop offset=".5" stop-color="#cdcdd0"/><stop offset="1" stop-color="#a2a2a2"/></linearGradient></defs>
        <g fill="#f7f9f8" stroke="#b5b5b5" stroke-width="4"><path d="M64 40H121V99H64ZM334 40H391V99H334ZM64 157H151V247H64ZM574 157H661V247H574ZM64 691H151V781H64ZM574 691H661V781H574Z"/>
        <path fill-rule="evenodd" d="M363 178C520 178 640 300 645 450L674 470 645 490C640 640 530 765 383 767L363 798 343 767C195 765 85 640 80 490L50 470 80 450C85 300 205 178 363 178ZM363 222C225 222 120 335 120 470C120 610 225 722 363 722C500 722 605 610 605 470C605 335 500 222 363 222Z"/></g>
        <path d="M363 147L408 252 363 229 318 252ZM363 238L386 252V307H340V252Z" fill="#fafbfb" stroke="#808080" stroke-width="4"/>
        <ellipse cx="363" cy="472" rx="188" ry="108" fill="none" stroke="url(#tor)" stroke-width="36"/><ellipse cx="363" cy="465" rx="190" ry="108" fill="none" stroke="#f4f4f5" stroke-width="14"/>
        <circle cx="362" cy="467" r="113" fill="url(#sph)"/>
        <path d="M175 472A188 108 0 0 0 551 472" fill="none" stroke="url(#tor)" stroke-width="36"/><path d="M175 465A188 103 0 0 0 551 465" fill="none" stroke="#f6f6f6" stroke-width="14"/>
        <path d="M76 60L90 76 104 60M107 232V184M85 203L107 181 130 203M107 710V758M85 738L107 761 130 738M595 205H641M618 182V228" fill="none" stroke="#484848" stroke-width="6"/><path d="M595 737H641" stroke="#484848" stroke-width="9"/>
        <path d="M362 62V46M354 52L362 44 370 52M362 78V94M354 88L362 96 370 88M354 69H338M346 61L338 69 346 77M370 69H386M378 61L386 69 378 77" fill="none" stroke="#555" stroke-width="4"/>
        <path d="M633 43h9v8h-9zM651 43h9v8h-9zM651 63h9v9h-9z" fill="#444"/>
      </svg>
    </div>
    <div class="status"><div class="scale">1,263,868 ft<svg><use href="#tri"/></svg></div>
      <svg class="si" viewBox="0 0 86 22"><path d="M.5 1V20" stroke="#ccc"/><path d="M9 1V14H15V7M15 1V7H21V1M9 7H21" fill="none" stroke="#888" stroke-width="1.300"/><path d="M23 9V21M17 15H29" stroke="#afdafa" stroke-width="4"/><path d="M23 10V20M18 15H28" stroke="#456" stroke-width="1.200"/><path d="M38 19L50 9L57 19Z" fill="#a7d4ee"/><path d="M37 19H57M39 11L46 4" stroke="#4b9ed8" stroke-width="1.500"/><path d="M37 2H42V5H37ZM51 12H56V15H51ZM49 4H56M52.500 1V7" fill="none" stroke="#555"/><path d="M37 17h4v4h-4z" fill="#51905c"/><path d="M65 1H85V21H65Z" fill="#a3a3a3"/><path d="M67 3h4v4h-4zM73 3h4v4h-4zM79 3h4v4h-4zM67 9h4v4h-4zM73 9h4v4h-4zM79 9h4v4h-4zM67 15h4v4h-4zM73 15h4v4h-4zM79 15h4v4h-4z" fill="#fff"/></svg><span class="vsep"></span>
    </div>
  </section>

  <aside class="sym">
    <h2>Symbology - H</h2>
    <div class="symi"><svg viewBox="0 0 30 33"><path d="M3 3Q15 5 26 2L29 26Q22 24 15 27Q8 30 0 27Z" fill="#e3cf50"/><path d="M23 14L9 26" stroke="#f7f7f7" stroke-width="5"/><path d="M23 14L10 25" stroke="#666" stroke-width="3"/><path d="M10 23Q4 24 3 32Q9 31 11 27Z" fill="#b07845"/></svg><svg viewBox="0 0 30 33"><path d="M21 1L7 12" stroke="#777" stroke-width="3"/><path d="M7 10Q2 12 1 19Q7 18 9 14Z" fill="#b07845"/><path d="M11 12L17 17H30V30H12V17Z" fill="#fff" stroke="#777" stroke-width="1.600"/><path d="M16 21H18M20 21H27M16 26H18M20 26H27" stroke="#7969a4" stroke-width="1.800"/></svg></div>
    <div class="sbar"></div>
    <h3>Primary symbology</h3>
    <div class="classify">Classify</div>
    <div class="fields">
      <label class="f1"><span>Field</span><b class="dis">No f</b></label>
      <label class="f2"><span>Normalization</span><b class="dis">No f</b></label>
      <label class="f3"><span>Method</span><b>Nat</b></label>
      <label class="f4"><span>Classes</span><b class="n10">10</b></label>
      <label class="f5"><span>Color scheme</span><b><i></i></b></label>
    </div>
    <div class="rules"></div>
    <div class="stabs"><span class="cur">Classes</span><span class="mask">Mask</span><span class="h">H</span></div>
    <div class="spane">
      <div class="table">
        <div class="tr th"><span>Color</span><span>U</span></div>
        <div class="tr cursel"><span></span><span><em>0-</em></span></div>
        <div class="tr alt"><span><i class="c1"></i></span><span>≤</span></div>
        <div class="tr"><span><i class="c2"></i></span><span>≤</span></div>
        <div class="tr alt"><span><i class="c3"></i></span><span>≤</span></div>
        <div class="tr"><span><i class="c4"></i></span><span>≤</span></div>
        <div class="tr alt"><span><i class="c5"></i></span><span>≤</span></div>
        <div class="tr"><span><i class="c6"></i></span><span>≤</span></div>
        <div class="tr alt"><span><i class="c7"></i></span><span>≤</span></div>
        <div class="tr"><span><i class="c8"></i></span><span>≤</span></div>
        <div class="tr alt"><span><i class="c9"></i></span><span>≤</span></div>
      </div>
    </div>
  </aside>
</main>
</body>
</html>
```
FILE: styles.css
```css
* { box-sizing: border-box; }
body { margin: 0; width: 1580px; height: 1112px; overflow: hidden; background: #f1f1f1; color: #444; font: 15px/18px "Open Sans", "Noto Sans", sans-serif; letter-spacing: -.28px; white-space: nowrap; }
h2, h3, p { margin: 0; font-weight: 400; }
svg { display: block; flex: none; }
.defs { position: absolute; width: 0; height: 0; }

.taskbar { height: 22px; background: #1d1b1b; display: flex; overflow: hidden; }
.slot { width: 46px; display: flex; justify-content: center; }
.slot:first-child { width: 42px; }
.slot svg { width: 26px; height: 22px; }
.slot.on { background: #4b4b4b; }
.person { width: 20px; height: 22px; margin-left: 872px; }

.head { height: 78px; display: flex; }
.head-main { width: 655px; display: flex; flex-direction: column; }
.title { height: 44px; display: flex; align-items: center; padding-top: 1px; }
.q { width: 20px; height: 20px; }
.q1 { margin-left: 10px; } .q2 { margin-left: 15px; } .q3 { margin-left: 15px; } .q4 { margin-left: 11px; } .q5 { margin-left: 7px; } .q6 { margin-left: 12px; }
.q7 { width: 8px; height: 9px; margin-left: 21px; }
.t { width: 7px; height: 4px; fill: #555; }
.t1 { margin-left: 4px; } .t2 { margin-left: 7px; }
.app { margin-left: 74px; margin-top: -4px; font-size: 15.5px; letter-spacing: -.53px; color: #8f8f8f; }
.tabs { height: 34px; display: flex; font-size: 15.5px; letter-spacing: -.15px; color: #666; line-height: 36px; text-align: center; }
.tabs b { font-weight: 400; }
.project { width: 92px; padding-right: 4px; background: #0078d0; color: #fff; }
.active { width: 64px; margin: 0 0 -1px 7px; background: #f8f8f8; border: 1px solid #bdbdbd; border-bottom: 0; color: #0078d0; line-height: 34px; position: relative; }
.w82 { width: 82px; } .w94 { width: 94px; } .w76 { width: 76px; } .w60 { width: 60px; } .w100 { width: 100px; }
.context { width: 187px; background: #efe5e0; border-top: 7px solid #d0826b; font-size: 15.5px; letter-spacing: -.3px; color: #666; text-align: center; }
.ctitle { height: 37px; line-height: 29px; padding-right: 3px; }
.ctabs { display: flex; line-height: 36px; }
.cap { width: 117px; } .cda { width: 76px; margin-right: -6px; padding-left: 2px; }

.ribbon { height: 120px; border: solid #bdbdbd; border-width: 1px 0; background: #f8f8f8; display: flex; }
.group { display: grid; grid-template: 96px 22px / 1fr auto; position: relative; }
.group::after { content: ""; position: absolute; right: 0; top: 4px; height: 108px; border-right: 1px solid #cfcfcf; }
.g1 { width: 152px; } .g2 { width: 255px; } .g3 { width: 189px; } .g4 { width: 298px; } .g5 { width: 219px; } .g6 { width: 230px; } .g7 { width: 177px; }
.body { grid-column: 1 / 3; display: flex; padding-top: 2px; height: 92px; }
.g2 .body { padding-left: 5px; } .g3 .body { padding-left: 7px; } .g4 .body { padding-left: 3px; } .g5 .body { padding-left: 4px; } .g6 .body { padding-left: 8px; } .g7 .body { padding-left: 4px; }
.glabel { font-size: 14px; text-align: center; line-height: 21px; padding-right: 8px; grid-column: 1; }
.g2 .glabel, .g4 .glabel, .g6 .glabel, .g7 .glabel { padding-right: 5px; }
.g3 .glabel { padding-right: 3px; }
.g5 .glabel { padding-right: 1px; }
.launch { width: 9px; height: 9px; margin: 6px 8px 0 0; }
.btn { display: flex; flex-direction: column; align-items: center; text-align: center; padding-top: 3px; line-height: 17px; font-size: 15px; letter-spacing: -.38px; }
.btn > svg:first-child { width: 40px; height: 44px; margin-bottom: 5px; }
.btn .tri { width: 8px; height: 5px; margin-top: 6px; fill: #555; }
.dd { display: flex; align-items: center; gap: 3px; }
.itri { width: 8px; height: 5px; fill: #555; }
.off { color: #9a9a9a; }
.off .tri, .off .itri { fill: #999; }
.sel { background: #bbd3e8; height: 88px; }
.w45 { width: 44px; } .w58 { width: 58px; } .w88 { width: 88px; } .w44 { width: 42px; } .w66 { width: 66px; } .w53 { width: 53px; } .w56 { width: 55px; } .w68 { width: 68px; } .w72 { width: 71px; } .w92 { width: 92px; } .w64 { width: 64px; } .w54 { width: 54px; } .w80 { width: 80px; } .w77 { width: 80px; }
.g4 .btn:nth-child(2), .g4 .btn:nth-child(3) { letter-spacing: -.5px; }
.small p { height: 30px; display: flex; align-items: center; gap: 5px; margin-bottom: -.2px; }
.g4 .small { padding-left: 1px; }
.g7 .small { padding-left: 1px; }
.small svg { width: 20px; height: 22px; }
.pl5 { padding-left: 6px; }
.lab { width: 134px; }
.lab i { font-style: normal; color: #9a9a9a; }
.lab .mtri { width: 6px; height: 4px; fill: #555; }
.lab .in { margin-left: 2px; }
.gold { --f: #f4e8c1; --s: #b98a4c; } .grey { --f: #eee; --s: #c2c2c2; }
.nav-grid { width: 53px; display: grid; grid-template-columns: 22px 22px; gap: 8px 5px; padding: 4px 3px; align-content: start; }
.nav-grid svg { width: 22px; height: 22px; }

.work { height: 892px; display: flex; padding-top: 7px; }
.contents { width: 401px; height: 877px; margin-left: 2px; background: #f7f9f8; border: 1px solid #d2d2d2; border-top: 7px solid #cbcbcb; border-bottom-width: 2px; overflow: hidden; }
.phead { height: 45px; display: flex; justify-content: space-between; padding: 5px 7px 0 6px; }
.phead h2 { font-size: 20px; line-height: 20px; color: #666; letter-spacing: -.7px; }
.phead svg { width: 52px; height: 14px; }
.search { display: flex; gap: 9px; padding-left: 5px; }
.funnel { width: 18px; height: 22px; margin-top: 4px; }
.box { width: 364px; height: 32px; border: 1px solid #8b8b8b; background: #fff; padding: 0 7px 0 6px; display: flex; justify-content: space-between; align-items: center; color: #555; }
.box svg { width: 32px; height: 16px; }
.box em { letter-spacing: -.6px; }
.views { display: flex; gap: 10px; padding: 11px 0 0 25px; height: 52px; }
.views svg { width: 30px; height: 33px; }
.bar { width: 241px; height: 3px; margin-left: 20px; background: linear-gradient(90deg, #0078c8 40px, #c9c9c9 40px); }
h3 { font-size: 17.8px; font-weight: 600; }
.contents h3 { margin: 17px 0 0 20px; height: 31px; line-height: 20px; }
.tree-wrap { display: flex; justify-content: space-between; height: 688px; padding-right: 1px; }
.tree { width: 385px; overflow: hidden; letter-spacing: -.37px; }
.row { display: flex; align-items: center; padding-left: 3px; }
.ex { width: 9px; height: 9px; margin-right: 6px; margin-top: -2px; }
.cityi { width: 20px; height: 23px; margin-right: 6px; }
.l1 { padding-left: 17px; } .l2 { padding-left: 31px; } .sy { padding-left: 50px; } .nox { padding-left: 46px; }
.med { font-weight: 500; }
.cb { width: 18px; height: 19px; background: #fdfdfd; border: 1px solid #c3c3c3; margin-right: 6px; display: grid; place-items: center; flex: none; }
.cb.on { border-color: #858585; }
.cb svg { width: 12px; height: 12px; }
.hill .ex { margin-right: 4px; }
.hl { width: 340px; height: 32px; background: #c5daed; border: 1px solid #2180c4; padding-left: 1px; display: flex; align-items: center; }
.redbox { width: 26px; height: 21px; border: 2px solid #f55; margin-top: -5px; }
.ramp { width: 26px; height: 64px; background: linear-gradient(#e21d0c, #f4902d 10%, #f6f277 22%, #32e62b 40%, #78fbe0 60%, #86b8f8 80%, #8f4a8c 90%, #93166c); }
.rl { height: 62px; margin-left: 7px; display: flex; flex-direction: column; justify-content: space-between; }
.h18 { height: 18px; } .h22 { height: 22px; } .h28 { height: 28px; } .h29 { height: 29px; } .h30 { height: 30px; } .h32 { height: 32px; } .h33 { height: 33px; } .h34 { height: 34px; } .h41 { height: 41px; } .h77 { height: 77px; }
.cls { height: 25.15px; display: flex; align-items: center; padding-left: 53px; }
.cls i { width: 20px; height: 17px; margin: -3px 11px 0 0; }
.c1 { background: #00336c; } .c2 { background: #3b496c; } .c3 { background: #575d6d; } .c4 { background: #707173; } .c5 { background: #8a8779; } .c6 { background: #a69d75; } .c7 { background: #c4b56c; } .c8 { background: #e4cf5b; } .c9 { background: #ffea46; }
.scroll { width: 10px; display: flex; flex-direction: column; gap: 3px; }
.scroll svg { width: 10px; height: 9px; }
.track { height: 662px; background: #dfdfdf; } .thumb { height: 473px; background: #757575; }

.view { width: 1029px; height: 877px; margin-left: 8px; border: solid #cfcfcf; border-width: 0 0 2px 1px; display: flex; flex-direction: column; }
.vtabs { height: 30px; border-bottom: 3px solid #cfcfcf; display: flex; background: #f1f1f1; margin-left: -1px; }
.vt1 { width: 93px; padding-left: 7px; display: flex; align-items: center; gap: 7px; color: #333; }
.vtabs svg { width: 20px; height: 20px; }
.vt2 { width: 128px; padding-left: 8px; background: #cdcdcd; display: flex; align-items: center; gap: 6px; color: #777; }
.vtabs .x { width: 11px; height: 11px; margin-left: 5px; }
.canvas { height: 815px; background: #fff; position: relative; overflow: hidden; }
.navigator { position: absolute; left: -2px; top: 533px; }
.status { height: 30px; background: #f7f9f8; display: flex; align-items: center; padding-left: 6px; }
.scale { width: 125px; height: 28px; border: 1px solid #999; background: #fff; padding: 0 6px 2px 5px; display: flex; align-items: center; justify-content: space-between; letter-spacing: -.5px; }
.scale svg { width: 6px; height: 5px; fill: #555; }
.si { width: 86px; height: 22px; margin-left: 7px; }
.vsep { height: 20px; border-left: 1px solid #ccc; margin-left: 7px; }

.sym { width: 140px; height: 863px; margin-top: 29px; border-left: 2px solid #0078d0; border-top: 6px solid #0078d0; background: #f7f9f8; overflow: hidden; }
.sym h2 { color: #0078c8; font-size: 20px; line-height: 36px; padding-left: 6px; height: 50px; letter-spacing: -.15px; }
.symi { display: flex; gap: 10px; padding-left: 18px; height: 42px; }
.symi svg { width: 30px; height: 33px; }
.sbar { width: 80px; height: 3px; margin-left: 13px; background: linear-gradient(90deg, #0078c8 40px, #c9c9c9 40px); }
.sym h3 { margin: 15px 0 0 9px; height: 28px; line-height: 21px; font-size: 17.5px; }
.classify { margin-left: 9px; height: 30px; width: 160px; background: #fff; border: 1px solid #aaa; line-height: 29px; padding-left: 3px; }
.fields { padding: 8px 0 0 9px; height: 197px; }
.fields label { display: grid; grid-template-columns: 101px 120px; height: 37px; }
.fields .f3, .fields .f4 { height: 35.5px; }
.fields b { font-weight: 400; height: 29px; background: #fff; border: 1px solid #aaa; line-height: 26px; padding-left: 3px; }
.fields span { line-height: 23px; }
.fields .dis { background: #e6e6e6; border-color: #d2d2d2; color: #999; font-style: italic; }
.fields .n10 { padding-left: 6px; }
.fields b i { display: block; height: 21px; margin-top: 3px; background: linear-gradient(90deg, #00204d, #00336f 20px); }
.rules { margin-left: 9px; height: 10px; border: solid #cacaca; border-width: 2px 0; }
.stabs { margin: 14px 0 0 9px; height: 29px; display: flex; text-align: center; line-height: 23px; position: relative; }
.stabs span { flex: none; width: 51px; height: 27px; margin-top: 2px; border: 1px solid #aaa; background: #f1f1f1; }
.stabs .cur { width: 69px; height: 30px; margin-top: 0; border-bottom: 0; background: #f8f8f8; line-height: 25px; }
.stabs .mask { margin-left: -1px; }
.stabs .h { width: 80px; padding-left: 6px; text-align: left; }
.spane { margin-left: 9px; height: 431px; border: solid #aaa; border-width: 0 0 1px 1px; background: #f9f9f9; padding: 54px 0 0 9px; }
.table { height: 371px; overflow: hidden; border: 1px solid #c9c9c9; border-right: 0; background: #fff; font-size: 14px; }
.tr { height: 35.6px; display: grid; grid-template-columns: 100px 120px; border-bottom: 1px solid #c6c6c6; }
.tr > span { padding: 8px 0 0 15px; } .tr > span:first-child { border-right: 1px solid #ddd; padding-left: 37px; padding-top: 5.5px; }
.tr i { display: block; width: 25px; height: 21px; }
.alt { background: #ebebeb; }
.th { height: 30px; background: #dedede; line-height: 17px; color: #333; } .th > span:first-child { padding-left: 8px; padding-top: 6px; } .th > span + span { background: #9dd3f2; padding: 6px 0 0 8px; }
.cursel { background: #c7e2f6; } .cursel > span + span { border-left: 1px solid #2885cf; padding: 4px 1px; }
.cursel em { display: block; height: 25px; background: #fff; border: 1px solid #3e91dd; font-style: normal; padding: 3px; }
```
